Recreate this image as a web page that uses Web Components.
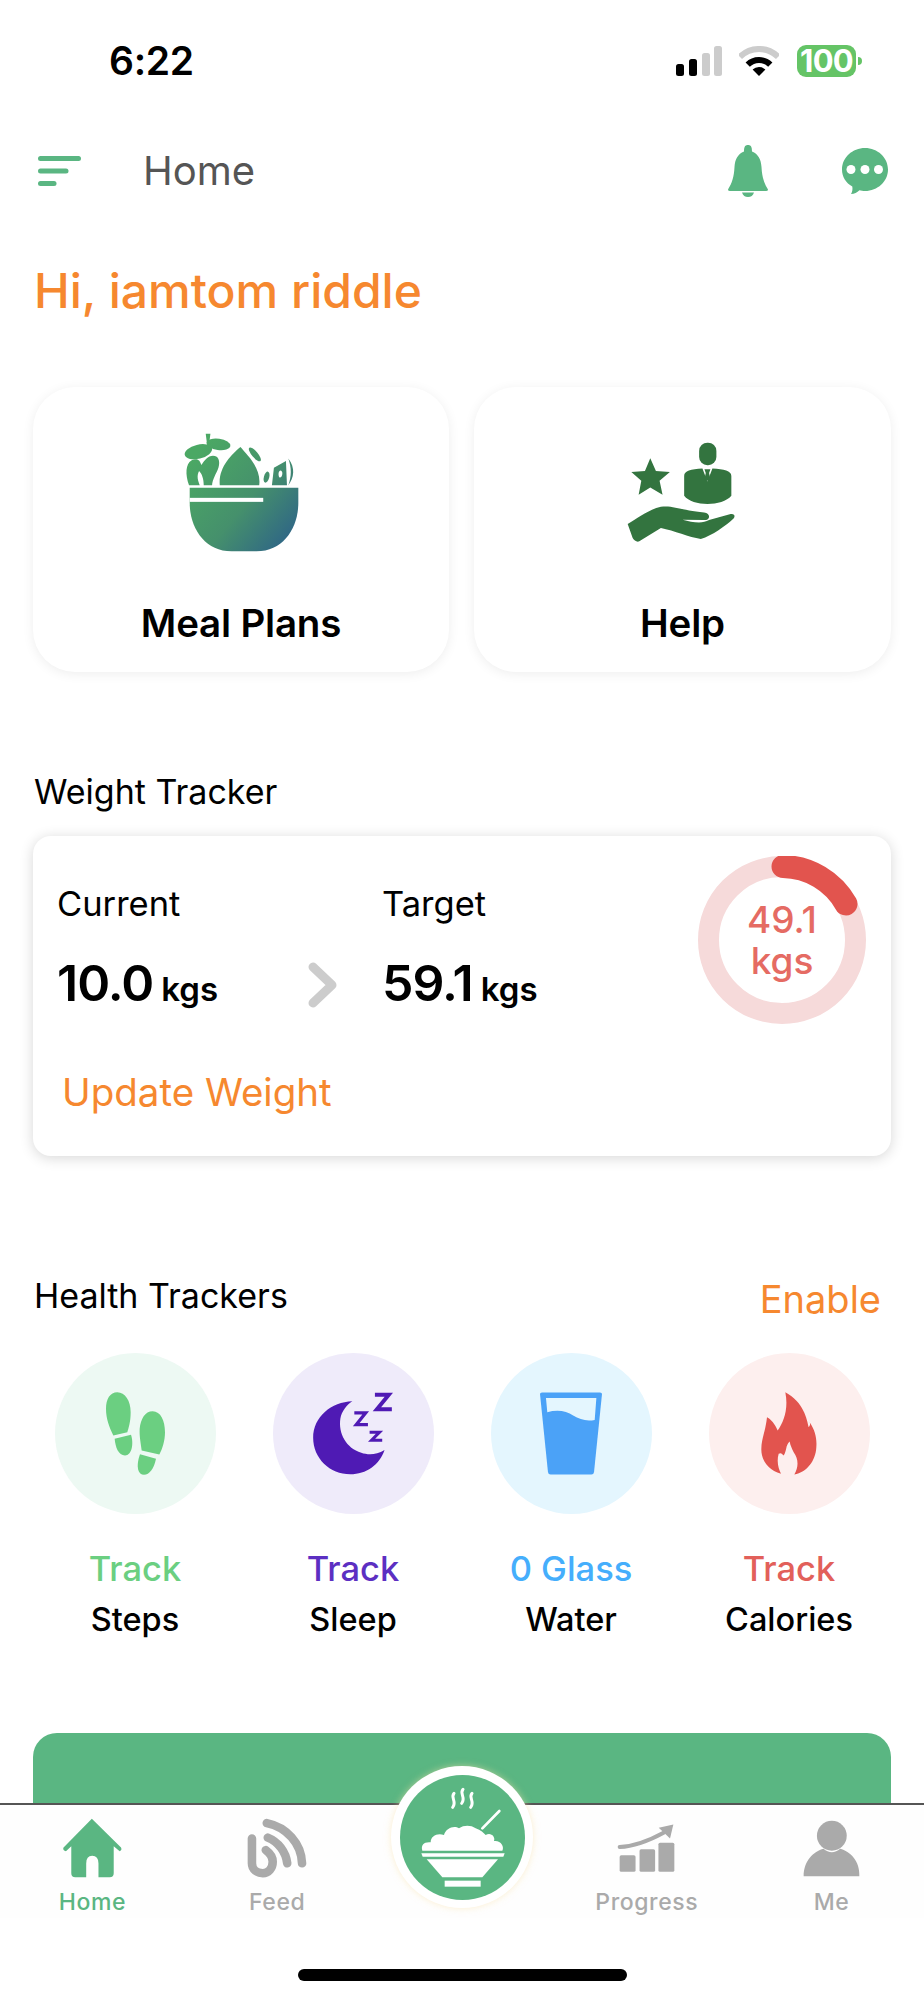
<!DOCTYPE html>
<html lang="en">
<head>
<meta charset="utf-8">
<title>Home</title>
<style>
  html, body { margin: 0; padding: 0; background: #fff; }
  body { font-family: Inter, "Liberation Sans", sans-serif; width: 924px; }
</style>
</head>
<body>
<app-screen>
  <status-bar></status-bar>
  <app-header title-text="Home"></app-header>
  <home-greeting>Hi, iamtom riddle</home-greeting>

  <card-row>
    <feature-card label="Meal Plans">
      <svg slot="icon" width="117" height="122" viewBox="100 60 350 365">
        <defs>
          <linearGradient id="bowlGrad" gradientUnits="userSpaceOnUse" x1="120" y1="150" x2="445" y2="420">
            <stop offset="0" stop-color="#4ba864"/>
            <stop offset="0.5" stop-color="#45906c"/>
            <stop offset="1" stop-color="#2a5c8c"/>
          </linearGradient>
        </defs>
        <g fill="url(#bowlGrad)">
          <path d="M120 230H445V275C445 350 400 420 320 420H245C165 420 120 350 120 275Z"/>
          <path d="M168 68H182L178 100H172Z"/>
          <ellipse cx="146" cy="122" rx="42" ry="21" transform="rotate(-14 146 122)"/>
          <ellipse cx="206" cy="100" rx="36" ry="17" transform="rotate(8 206 100)"/>
          <path d="M118 222C106 190 108 158 125 148C145 140 150 148 155 162C165 146 182 126 202 138C214 150 207 175 197 190C190 205 187 215 187 222H162C162 205 157 188 148 180C140 195 145 210 150 222Z"/>
          <path d="M210 222C205 170 245 130 272 108C290 130 335 170 328 222Z"/>
          <ellipse cx="315" cy="130" rx="26" ry="9" transform="rotate(50 315 130)"/>
          <ellipse cx="350" cy="198" rx="8" ry="17" transform="rotate(15 350 198)"/>
          <path fill-rule="evenodd" d="M366 222L372 170L408 150L411 222ZM392 178C386 178 384 190 388 198C394 202 398 192 397 184C396 180 394 178 392 178Z"/>
          <path d="M415 142C437 170 432 200 415 222C425 195 425 170 415 142Z"/>
        </g>
        <rect x="120" y="260" width="220" height="12" fill="#fff"/>
      </svg>
    </feature-card>
    <feature-card label="Help">
      <svg slot="icon" width="113" height="103" viewBox="80 60 340 310">
        <g fill="#33743f">
          <rect x="300" y="65" width="52" height="68" rx="25"/>
          <path d="M255 165C255 150 275 145 310 143L325 182L340 143C375 145 397 150 397 165V225C370 258 280 258 255 225Z"/>
          <path d="M316 145H334L330 156L334 176L325 180L316 176L320 156Z"/>
          <path d="M153 112L170 150L212 153L181 180L190 222L153 200L118 222L126 180L96 153L137 150Z"/>
          <path d="M85 310C110 295 150 265 185 258C220 252 250 270 315 275C335 278 335 298 315 298L250 297C280 305 310 310 330 298L395 280C410 278 408 290 402 295C380 315 340 345 305 355C270 350 225 330 185 322L120 362C112 365 105 360 100 352Z"/>
        </g>
      </svg>
    </feature-card>
  </card-row>

  <section-title style="margin-top:98px">Weight Tracker</section-title>
  <weight-card></weight-card>

  <trackers-head>
    <span>Health Trackers</span>
    <span slot="action">Enable</span>
  </trackers-head>
  <tracker-grid>
    <tracker-item value="Track" label="Steps" style="--accent:#6bcf81;--soft:#edf9f3">
      <svg slot="icon" width="61" height="85" viewBox="225 397 183 254" fill="#6bcf81">
        <path d="M262 400C285 400 302 425 302 460C302 490 295 510 292 520L250 530C238 505 228 480 228 450C228 420 240 400 262 400Z"/>
        <path d="M254 540L303 528C312 555 305 590 285 590C265 590 256 565 254 540Z"/>
        <path d="M368 457C392 457 405 485 405 520C405 545 397 570 388 587L335 575C332 550 328 535 329 510C332 480 345 457 368 457Z"/>
        <path d="M330 586L378 600C372 630 358 648 342 648C325 648 316 625 330 586Z"/>
      </svg>
    </tracker-item>
    <tracker-item value="Track" label="Sleep" style="--accent:#5c2fc2;--soft:#efebfa">
      <svg slot="icon" width="80" height="83" viewBox="850 400 240 250">
        <path fill="#4f1ab4" d="M968 428C905 430 850 475 850 538C850 600 900 648 962 648C1010 648 1050 620 1065 575C1040 590 1015 590 995 583C950 570 925 525 932 480C936 458 950 440 968 428Z"/>
        <g fill="none" stroke="#4f1ab4">
          <polyline stroke-width="12" points="1036,408 1078,408 1042,452 1087,452"/>
          <polyline stroke-width="10" points="974,463 1008,463 980,498 1015,498"/>
          <polyline stroke-width="9" points="1020,521 1050,521 1026,545 1058,545"/>
        </g>
      </svg>
    </tracker-item>
    <tracker-item value="0 Glass" label="Water" style="--accent:#45aefc;--soft:#e4f6fe">
      <svg slot="icon" width="62" height="83" viewBox="210 400 187 248">
        <path fill="#4ba2f7" d="M210 405Q210 400 216 400H391Q397 400 397 405L373 640Q372 648 365 648H242Q235 648 234 640Z"/>
        <path fill="#e4f6fe" d="M228 417H380L375 483C350 488 330 482 310 470C290 455 260 452 232 460Z"/>
      </svg>
    </tracker-item>
    <tracker-item value="Track" label="Calories" style="--accent:#e2605a;--soft:#fdefee">
      <svg slot="icon" width="56" height="83" viewBox="872 400 168 248">
        <path fill="#e2544e" d="M945 400C1000 430 1010 480 1015 505C1020 500 1020 495 1018 490C1035 515 1040 540 1038 565C1036 605 1010 640 972 647C985 625 985 600 970 580C965 570 960 560 958 548C945 560 950 575 940 590C935 585 932 580 925 585C918 610 925 630 932 645C895 635 872 605 873 570C873 540 885 520 890 475C900 480 915 495 922 515C940 490 955 450 945 400Z"/>
      </svg>
    </tracker-item>
  </tracker-grid>
  <promo-banner></promo-banner>

  <tab-bar slot="footer">
    <tab-item label="Home" active>
      <svg slot="icon" width="61" height="60" viewBox="183 293 182 181" fill="#5ab682">
        <path d="M272 295L360 382Q364 390 356 393L338 378V460Q338 472 326 472H292V430Q292 407 273 407Q255 407 255 430V472H222Q210 472 210 460V378L194 393Q184 392 186 383Z"/>
      </svg>
    </tab-item>
    <tab-item label="Feed">
      <svg slot="icon" width="60" height="60" viewBox="740 293 182 181" fill="none" stroke="#aaa" stroke-width="26" stroke-linecap="round">
        <path d="M755 355V430C755 450 772 460 788 460C805 460 818 445 818 425C818 408 808 398 797 390"/>
        <path d="M800 308C860 320 905 370 907 430"/>
        <path d="M803 352C835 365 858 395 862 430"/>
      </svg>
    </tab-item>
    <tab-item></tab-item>
    <tab-item label="Progress">
      <svg slot="icon" width="59" height="50" viewBox="462 310 178 150" fill="#aaa">
        <rect x="470" y="407" width="48" height="50" rx="5"/>
        <rect x="530" y="389" width="47" height="68" rx="5"/>
        <rect x="587" y="369" width="48" height="88" rx="5"/>
        <path d="M470 382C515 380 560 362 604 338" fill="none" stroke="#aaa" stroke-width="12" stroke-linecap="round"/>
        <path d="M632 314L588 324L622 356Z"/>
      </svg>
    </tab-item>
    <tab-item label="Me">
      <svg slot="icon" width="57" height="57" viewBox="1018 298 172 171" fill="#aaa">
        <circle cx="1105" cy="345" r="45"/>
        <path d="M1020 467C1020 420 1050 392 1080 384C1095 398 1115 398 1130 384C1160 392 1190 420 1188 467Z"/>
      </svg>
    </tab-item>
    <meal-button></meal-button>
  </tab-bar>
  <home-indicator slot="footer"></home-indicator>
</app-screen>

<script>
// 每个组件自己管理shadow里的样式
customElements.define('app-screen', class extends HTMLElement {
  constructor() {
    super();
    const shadowRoot = this.attachShadow({ mode: 'open' });
    shadowRoot.innerHTML = `
      <style>
        :host { display: flex; flex-direction: column; width: 924px; height: 2000px; overflow: hidden; background: #fff; }
        main { flex: 1; min-height: 0; overflow: hidden; }
      </style>
      <main><slot></slot></main>
      <slot name="footer"></slot>
    `;
  }
});

customElements.define('status-bar', class extends HTMLElement {
  constructor() {
    super();
    const shadowRoot = this.attachShadow({ mode: 'open' });
    shadowRoot.innerHTML = `
      <style>
        :host { display: flex; align-items: center; height: 100px; padding: 21px 62px 0 109px; box-sizing: border-box; }
        .time { font-size: 39px; font-weight: 600; color: #000; line-height: 46px; flex: 1; letter-spacing: -0.3px; }
        .icons { display: flex; align-items: center; }
        .signal { margin-right: 17px; }
        .wifi { margin-right: 18px; }
        .battery { position: relative; width: 59px; height: 32px; border-radius: 9px; background: #65c466; color: #fff; font-size: 31px; font-weight: 700; line-height: 32px; text-align: center; letter-spacing: -0.8px; }
        .tip { width: 4px; height: 8px; margin-left: 2px; background: #65c466; border-radius: 0 4px 4px 0; }
      </style>
      <div class="time">6:22</div>
      <div class="icons">
        <svg class="signal" width="46" height="30" viewBox="0 0 46 30">
          <rect x="0" y="18" width="8" height="12" rx="2.5" fill="#000"/>
          <rect x="13" y="13" width="8" height="17" rx="2.5" fill="#000"/>
          <rect x="26" y="7" width="8" height="23" rx="2.5" fill="#ccc"/>
          <rect x="38" y="0" width="8" height="30" rx="2.5" fill="#ccc"/>
        </svg>
        <svg class="wifi" width="40" height="30" viewBox="0 0 40 30">
          <path d="M.9 10.9A27 27 0 0 1 39.1 10.9" fill="none" stroke="#ccc" stroke-width="6"/>
          <path d="M8.7 18.7A16 16 0 0 1 31.3 18.7" fill="none" stroke="#000" stroke-width="6"/>
          <path d="M20 30L13.6 23.6A9 9 0 0 1 26.4 23.6Z" fill="#000"/>
        </svg>
        <div class="battery">100</div>
        <div class="tip"></div>
      </div>
    `;
  }
});

customElements.define('app-header', class extends HTMLElement {
  constructor() {
    super();
    const shadowRoot = this.attachShadow({ mode: 'open' });
    shadowRoot.innerHTML = `
      <style>
        :host { display: flex; align-items: center; height: 70px; margin-top: 36px; padding: 0 36px 0 38px; }
        .title { font-size: 40px; color: #555; margin-left: 62px; flex: 1; line-height: 50px; }
        .bell { margin-right: 74px; }
      </style>
      <svg width="43" height="30" viewBox="0 0 43 30">
        <g stroke="#5ab682" stroke-width="5" stroke-linecap="round">
          <line x1="2.5" y1="2.5" x2="40.5" y2="2.5"/>
          <line x1="2.5" y1="15" x2="28" y2="15"/>
          <line x1="2.5" y1="27.5" x2="16" y2="27.5"/>
        </g>
      </svg>
      <div class="title">${this.getAttribute('title-text')}</div>
      <svg class="bell" width="40" height="52" viewBox="0 0 40 52" fill="#5ab682">
        <path d="M20 0C23 0 24 2 24 6.500C30 9 33 14 33.500 22C34 32 36 38 40 44.500Q40 46 38 46H2Q0 46 0 44.500C4 38 6 32 6.500 22C7 14 10 9 16 6.500C16 2 17 0 20 0Z"/>
        <path d="M14 47.500H26C25 50.500 23 52 20 52C17 52 15 50.500 14 47.500Z"/>
      </svg>
      <svg width="46" height="46" viewBox="0 0 46 46">
        <path fill="#5ab682" d="M23 0C35.500 0 46 9.500 46 21.500C46 33.500 35.500 43 23 43C21 43 19 42.700 17.500 42.300C15 44.500 12.500 46 9 46C10.500 43.500 10.700 41 10.300 38.500C4 35 0 29 0 21.500C0 9.500 10.500 0 23 0Z"/>
        <g fill="#fff">
          <circle cx="9" cy="21.500" r="4.500"/>
          <circle cx="23" cy="21.500" r="4.500"/>
          <circle cx="36.500" cy="21.500" r="4.500"/>
        </g>
      </svg>
    `;
  }
});

customElements.define('home-greeting', class extends HTMLElement {
  constructor() {
    super();
    const shadowRoot = this.attachShadow({ mode: 'open' });
    shadowRoot.innerHTML = `
      <style>
        :host { display: block; margin-top: 55px; padding-left: 34px; font-size: 48px; font-weight: 450; line-height: 60px; color: #f6882f; }
      </style>
      <slot></slot>
    `;
  }
});

customElements.define('card-row', class extends HTMLElement {
  constructor() {
    super();
    const shadowRoot = this.attachShadow({ mode: 'open' });
    shadowRoot.innerHTML = `
      <style>
        :host { display: grid; grid-template-columns: 416px 417px; gap: 25px; margin: 66px 33px 0; }
      </style>
      <slot></slot>
    `;
  }
});

customElements.define('feature-card', class extends HTMLElement {
  constructor() {
    super();
    const shadowRoot = this.attachShadow({ mode: 'open' });
    shadowRoot.innerHTML = `
      <style>
        :host { display: flex; flex-direction: column; align-items: center; height: 285px; border-radius: 42px; background: #fff; box-shadow: 0 2px 12px rgba(0,0,0,.07); }
        .icon { height: 190px; display: flex; align-items: center; justify-content: center; padding-top: 20px; box-sizing: border-box; }
        .label { font-size: 38.5px; font-weight: 600; color: #000; line-height: 48px; margin-top: 22px; letter-spacing: -0.2px; }
      </style>
      <div class="icon"><slot name="icon"></slot></div>
      <div class="label">${this.getAttribute('label')}</div>
    `;
  }
});

customElements.define('section-title', class extends HTMLElement {
  constructor() {
    super();
    const shadowRoot = this.attachShadow({ mode: 'open' });
    shadowRoot.innerHTML = `
      <style>
        :host { display: block; padding-left: 34px; font-size: 34px; line-height: 44px; color: #000; }
      </style>
      <slot></slot>
    `;
  }
});

customElements.define('weight-stat', class extends HTMLElement {
  constructor() {
    super();
    const shadowRoot = this.attachShadow({ mode: 'open' });
    shadowRoot.innerHTML = `
      <style>
        :host { display: block; }
        .label { font-size: 34.5px; line-height: 44px; color: #000; }
        .value { margin-top: 27px; font-size: 50px; font-weight: 600; line-height: 60px; color: #000; letter-spacing: -1px; }
        .unit { font-size: 33px; letter-spacing: 0; margin-left: 8px; }
      </style>
      <div class="label">${this.getAttribute('label')}</div>
      <div class="value">${this.getAttribute('value')}<span class="unit">kgs</span></div>
    `;
  }
});

customElements.define('weight-ring', class extends HTMLElement {
  constructor() {
    super();
    const shadowRoot = this.attachShadow({ mode: 'open' });
    shadowRoot.innerHTML = `
      <style>
        :host { display: grid; width: 168px; height: 168px; }
        svg, .text { grid-area: 1 / 1; }
        .text { align-self: center; text-align: center; font-size: 37px; line-height: 41px; font-weight: 500; color: #e56b63; }
      </style>
      <svg width="168" height="168" viewBox="0 0 168 168">
        <circle cx="84" cy="84" r="73.500" fill="none" stroke="#f6dada" stroke-width="21"/>
        <path d="M85 10.500A73.500 73.500 0 0 1 148 48" fill="none" stroke="#e2544e" stroke-width="23" stroke-linecap="round"/>
      </svg>
      <div class="text">49.1<br>kgs</div>
    `;
  }
});

customElements.define('weight-card', class extends HTMLElement {
  constructor() {
    super();
    const shadowRoot = this.attachShadow({ mode: 'open' });
    shadowRoot.innerHTML = `
      <style>
        :host { display: block; margin: 22px 33px 0; height: 320px; box-sizing: border-box; padding: 20px 25px 0 24px; border-radius: 18px; background: #fff; box-shadow: 0 2px 14px rgba(0,0,0,.16); }
        .top { display: grid; grid-template-columns: 250px 75px 1fr auto; }
        weight-stat { margin-top: 26px; }
        .chev { margin-top: 106px; margin-left: 1px; }
        .update { margin: 45px 0 0 5px; font-size: 38.5px; line-height: 46px; color: #f6882f; }
      </style>
      <div class="top">
        <weight-stat label="Current" value="10.0"></weight-stat>
        <svg class="chev" width="30" height="46" viewBox="0 0 30 46" fill="none" stroke="#ccc" stroke-width="9" stroke-linejoin="round" stroke-linecap="round">
          <polyline points="5,5 24,23 5,41"/>
        </svg>
        <weight-stat label="Target" value="59.1"></weight-stat>
        <weight-ring></weight-ring>
      </div>
      <div class="update">Update Weight</div>
    `;
  }
});

customElements.define('trackers-head', class extends HTMLElement {
  constructor() {
    super();
    const shadowRoot = this.attachShadow({ mode: 'open' });
    shadowRoot.innerHTML = `
      <style>
        :host { display: flex; justify-content: space-between; align-items: center; margin-top: 114px; padding: 0 43px 0 34px; height: 50px; font-size: 34px; color: #000; }
        .action { font-size: 38px; color: #f6882f; padding-top: 8px; }
      </style>
      <slot></slot>
      <div class="action"><slot name="action"></slot></div>
    `;
  }
});

customElements.define('tracker-grid', class extends HTMLElement {
  constructor() {
    super();
    const shadowRoot = this.attachShadow({ mode: 'open' });
    shadowRoot.innerHTML = `
      <style>
        :host { display: grid; grid-template-columns: repeat(4, 218px); margin: 33px 0 0 26px; }
      </style>
      <slot></slot>
    `;
  }
});

customElements.define('tracker-item', class extends HTMLElement {
  constructor() {
    super();
    const shadowRoot = this.attachShadow({ mode: 'open' });
    shadowRoot.innerHTML = `
      <style>
        :host { display: flex; flex-direction: column; align-items: center; }
        .circle { width: 161px; height: 161px; border-radius: 50%; background: var(--soft); display: flex; align-items: center; justify-content: center; }
        .value { margin-top: 33px; font-size: 34.5px; line-height: 44px; font-weight: 450; color: var(--accent); }
        .label { margin-top: 7px; font-size: 32.5px; line-height: 44px; font-weight: 450; color: #000; }
      </style>
      <div class="circle"><slot name="icon"></slot></div>
      <div class="value">${this.getAttribute('value')}</div>
      <div class="label">${this.getAttribute('label')}</div>
    `;
  }
});

customElements.define('promo-banner', class extends HTMLElement {
  constructor() {
    super();
    const shadowRoot = this.attachShadow({ mode: 'open' });
    shadowRoot.innerHTML = `
      <style>
        :host { display: block; margin: 91px 33px 0; height: 200px; border-radius: 24px; background: #5ab682; }
      </style>
    `;
  }
});

customElements.define('tab-bar', class extends HTMLElement {
  constructor() {
    super();
    const shadowRoot = this.attachShadow({ mode: 'open' });
    shadowRoot.innerHTML = `
      <style>
        :host { display: grid; grid-template-columns: repeat(5, 1fr); position: relative; height: 113px; box-sizing: content-box; border-top: 2px solid #555; background: #fefefe; }
      </style>
      <slot></slot>
    `;
  }
});

customElements.define('tab-item', class extends HTMLElement {
  constructor() {
    super();
    const shadowRoot = this.attachShadow({ mode: 'open' });
    const label = this.getAttribute('label') || '';
    shadowRoot.innerHTML = `
      <style>
        :host { display: flex; flex-direction: column; align-items: center; padding-top: 13px; }
        .icon { height: 60px; display: flex; align-items: center; justify-content: center; }
        .label { margin-top: 10px; font-size: 23px; line-height: 28px; font-weight: 500; letter-spacing: .6px; color: ${this.hasAttribute('active') ? '#5ab682' : '#aaa'}; }
      </style>
      <div class="icon"><slot name="icon"></slot></div>
      <div class="label">${label}</div>
    `;
  }
});

customElements.define('meal-button', class extends HTMLElement {
  constructor() {
    super();
    const shadowRoot = this.attachShadow({ mode: 'open' });
    shadowRoot.innerHTML = `
      <style>
        :host { position: absolute; left: 391px; top: -39px; width: 142px; height: 142px; box-sizing: border-box; border-radius: 50%; background: #fff; display: flex; align-items: center; justify-content: center; box-shadow: 0 0 7px rgba(250,225,170,.55); }
      </style>
      <svg width="125" height="125" viewBox="58 45 375 375">
        <circle cx="245.500" cy="232.500" r="187.500" fill="#5ab682"/>
        <g fill="#fff">
          <path d="M125 272C120 255 130 245 150 247C150 228 170 218 190 225C195 205 220 195 235 205C250 195 270 195 285 205C300 210 310 220 315 225C330 215 345 230 340 243C360 240 372 260 365 272Z"/>
          <path d="M122 280H372L368 290H126Z"/>
          <path d="M138 298H352L305 352H185Z"/>
          <rect x="192" y="362" width="108" height="18"/>
        </g>
        <g fill="none" stroke="#fff" stroke-linecap="round">
          <line x1="305" y1="205" x2="356" y2="153" stroke-width="8"/>
          <path stroke-width="9" d="M220 100C208 112 230 125 216 142"/>
          <path stroke-width="9" d="M247 88C235 100 257 113 243 130"/>
          <path stroke-width="9" d="M274 100C262 112 284 125 270 142"/>
        </g>
      </svg>
    `;
  }
});

customElements.define('home-indicator', class extends HTMLElement {
  constructor() {
    super();
    const shadowRoot = this.attachShadow({ mode: 'open' });
    shadowRoot.innerHTML = `
      <style>
        :host { display: flex; justify-content: center; height: 82px; padding-top: 51px; box-sizing: border-box; background: #fff; }
        div { width: 329px; height: 12px; border-radius: 6px; background: #000; }
      </style>
      <div></div>
    `;
  }
});
</script>
</body>
</html>
